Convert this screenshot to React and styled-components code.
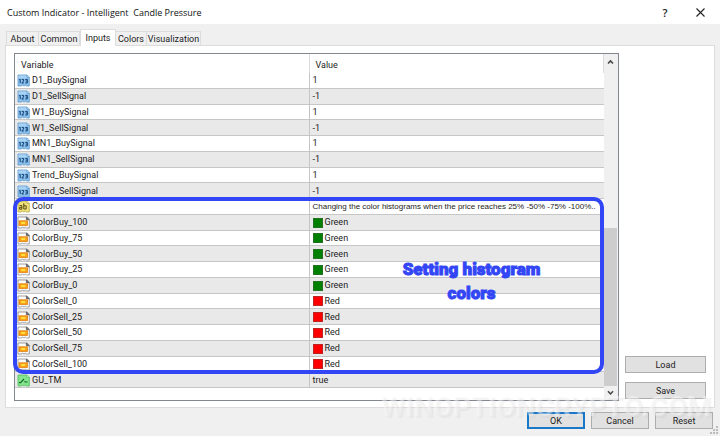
import React from "react";
import styled, { createGlobalStyle } from "styled-components";

const GlobalStyle = createGlobalStyle`
    * {
        box-sizing: border-box;
    }

    body {
        margin: 0;
        background: #f0f0f0;
        color: #1c1c1c;
        font-family: Roboto, "Liberation Sans", sans-serif;
        font-size: 9px;
    }
`

const Dialog = styled.div`
    position: relative;
    display: flex;
    flex-direction: column;
    min-height: 100vh;
    overflow: hidden;
`

const TitleBar = styled.header`
    display: flex;
    align-items: center;
    height: 24px;
    padding: 0 13px 0 7px;
    background: #fff;
`

const Title = styled.h1`
    flex: 1;
    margin: 0;
    font-family: "Open Sans", "Noto Sans", sans-serif;
    font-size: 9px;
    font-weight: 400;
    white-space: pre;
    color: #111;
`

const TitleButton = styled.button`
    display: flex;
    align-items: center;
    justify-content: center;
    width: 14px;
    height: 20px;
    margin-left: 21px;
    padding: 0;
    border: 0;
    background: none;
    font-family: "Open Sans", sans-serif;
    font-size: 11px;
    font-weight: 600;
    color: #222;
`

const Tabs = styled.nav`
    display: flex;
    align-items: flex-end;
    height: 21px;
    padding-left: 6px;
`

const Tab = styled.button`
    position: relative;
    z-index: ${props => (props.$active ? 1 : 0)};
    width: ${props => props.$width}px;
    height: ${props => (props.$active ? 17 : 14)}px;
    margin-bottom: ${props => (props.$active ? -1 : 0)}px;
    padding: 0;
    border: 1px solid #dcdcdc;
    border-bottom: 0;
    border-left-width: ${props => (props.$joined ? 0 : 1)}px;
    background: ${props => (props.$active ? "#fff" : "#f0f0f0")};
    font: inherit;
    color: inherit;
`

const Panel = styled.main`
    display: flex;
    gap: 6px;
    margin: 0 5px;
    padding: 7px 8px 6px;
    border: 1px solid #dcdcdc;
    background: #fff;
`

const List = styled.div`
    position: relative;
    flex: 1;
    display: flex;
    height: 348px;
    border: 1px solid #828790;
    background: #fff;
`

const Rows = styled.div`
    flex: 1;
    min-width: 0;
`

const Table = styled.table`
    width: 100%;
    height: 334px;
    table-layout: fixed;
    border-collapse: separate;
    border-spacing: 0;
`

const HeadCell = styled.th`
    height: 19px;
    padding: 2px 6px 0;
    border-right: 1px solid #dcdcdc;
    font-weight: 400;
    text-align: left;
`

const Row = styled.tr`
    &:nth-child(even) {
        background: #e9e9e9;
    }
`

const Cell = styled.td`
    padding: 1px 0 0 3px;
    border-bottom: 1px solid #c6c6c6;
    line-height: 13px;
    white-space: nowrap;

    &:first-child {
        padding-left: 2px;
        border-right: 1px solid #c6c6c6;
    }
`

const CellContent = styled.div`
    display: flex;
    align-items: center;
    gap: 2px;
    height: 13px;
`

const Caption = styled.span`
    font-family: "Liberation Sans", Arial, sans-serif;
    font-size: 8px;
`

const Swatch = styled.span`
    width: 10px;
    height: 10px;
    border: 1px solid rgba(90, 90, 90, 0.4);
    background: ${props => props.$color};
`

const ScrollBar = styled.div`
    display: flex;
    flex-direction: column;
    width: 14px;
    padding: 1px 1px 0 0;
    background: #f0f0f0;
`

const ScrollButton = styled.button`
    display: flex;
    align-items: center;
    justify-content: center;
    height: 14px;
    padding: 0;
    border: 0;
    background: #f0f0f0;
`

const ScrollTrack = styled.div`
    flex: 1;
    display: flex;
    flex-direction: column;
    justify-content: flex-end;
`

const ScrollThumb = styled.div`
    height: 50%;
    background: #cdcdcd;
`

const Side = styled.div`
    display: flex;
    flex-direction: column;
    justify-content: flex-end;
    gap: 9px;
    width: 81px;
    padding-bottom: 2px;
`

const Button = styled.button`
    height: 17px;
    min-width: 58px;
    padding: 0;
    border: ${props => (props.$primary ? "2px solid #1a78c8" : "1px solid #adadad")};
    background: #e1e1e1;
    font: inherit;
    color: inherit;
`

const Footer = styled.footer`
    display: flex;
    justify-content: flex-end;
    gap: 6px;
    padding: 4px 7px 6px;
`

const Grip = styled.svg`
    position: absolute;
    right: 2px;
    bottom: 2px;
`

const Highlight = styled.div`
    position: absolute;
    top: 143px;
    left: -2px;
    right: 14px;
    height: 177px;
    display: flex;
    align-items: center;
    justify-content: center;
    padding: 0 0 10px 326px;
    border: 4px solid #3346f5;
    border-radius: 10px;
    pointer-events: none;
`

const HighlightText = styled.p`
    margin: 0;
    font-family: Impact, Roboto, "Liberation Sans", sans-serif;
    font-size: 17px;
    font-weight: 900;
    line-height: 24px;
    text-align: center;
    white-space: nowrap;
    color: #3346f5;
    -webkit-text-stroke: 1px #3346f5;
`

const Watermark = styled.div`
    position: absolute;
    right: 8px;
    bottom: 4px;
    font-family: Impact, Roboto, "Liberation Sans", sans-serif;
    font-size: 28px;
    font-weight: 700;
    line-height: 48px;
    color: rgba(240, 240, 240, 0.2);
    text-shadow: 1px 1px 1px rgba(0, 0, 0, 0.04), -1px -1px 1px rgba(255, 255, 255, 0.4);
    pointer-events: none;
`

function NumberIcon(){
    return(
        <svg width="13" height="13" viewBox="0 0 13 13" aria-hidden="true">
            <path d="M1 1h9l2.3 2v9H9.5l-1-.8-1.5.8-1.5-.8-1.5.8H1z" fill="#8cc2ee" stroke="#5b98cc" strokeWidth="0.8"/>
            <path d="M1.5 1.5h8L10 4.5H1.5z" fill="#a9d2f5"/>
            <path d="M10 1v2.3h2.3" fill="#d9ecfb" stroke="#4d8cc4" strokeWidth="0.6"/>
            <path d="M2.2 5.8l1-.6v4M4.8 5.4h1.8v1.6l-1.8 2h2M8.3 5.4h2v3.6h-2M8.6 7.1h1.6" fill="none" stroke="#123f73" strokeWidth="1"/>
        </svg>
    )
}

function TextIcon(){
    return(
        <svg width="13" height="13" viewBox="0 0 13 13" aria-hidden="true">
            <path d="M1 1h9l2.3 2v9H9.5l-1-.8-1.5.8-1.5-.8-1.5.8H1z" fill="#efe27a" stroke="#b8a746" strokeWidth="0.8"/>
            <path d="M10 1v2.3h2.3" fill="#fbf6c4" stroke="#a8983c" strokeWidth="0.6"/>
            <path d="M2.5 5.6h2.4v3.6H2.6V7.4h2.2M6.8 3.2V9h2.4V5.8H6.8" fill="none" stroke="#5a4c10" strokeWidth="1"/>
        </svg>
    )
}

function ColorIcon(){
    return(
        <svg width="13" height="13" viewBox="0 0 13 13" aria-hidden="true">
            <path d="M1 1h9l2.3 2v9H9.5l-1-.8-1.5.8-1.5-.8-1.5.8H1z" fill="#fbfbfb" stroke="#8a8a8a" strokeWidth="0.8"/>
            <path d="M9.4 1v2.8h2.9z" fill="#666" stroke="#555" strokeWidth="0.7"/>
            <rect x="2" y="4.8" width="8.4" height="4.6" fill="#f7a01c" stroke="#e5800c" strokeWidth="0.8"/>
            <rect x="4.2" y="6" width="4" height="2" fill="#ffdf3a"/>
        </svg>
    )
}

function BoolIcon(){
    return(
        <svg width="13" height="13" viewBox="0 0 13 13" aria-hidden="true">
            <path d="M1 1h9l2.3 2v9H9.5l-1-.8-1.5.8-1.5-.8-1.5.8H1z" fill="#84e58c" stroke="#4fb85c" strokeWidth="0.8"/>
            <path d="M10 1v2.3h2.3" fill="#d3f8d6" stroke="#4fb85c" strokeWidth="0.6"/>
            <path d="M2 8.6h1.6l3.4-3.6M7.4 7.4l1 .6h2.2" fill="none" stroke="#14682a" strokeWidth="1.2"/>
        </svg>
    )
}

function Arrow({ down }){
    return(
        <svg width="7" height="6" viewBox="0 0 7 6" aria-hidden="true">
            <path d={down ? "M1 1.3l2.5 2.6L6 1.3" : "M1 4.5l2.5-2.6L6 4.5"} fill="none" stroke="#444" strokeWidth="1.5"/>
        </svg>
    )
}

const icons = {
    number: NumberIcon,
    text: TextIcon,
    color: ColorIcon,
    bool: BoolIcon,
}

const swatches = { Green: "#008000", Red: "#ff0000" }

const tabs = [
    { name: "About", width: 33 },
    { name: "Common", width: 41 },
    { name: "Inputs", width: 36 },
    { name: "Colors", width: 31 },
    { name: "Visualization", width: 54 },
]

const inputs = [
    ["number", "D1_BuySignal", "1"],
    ["number", "D1_SellSignal", "-1"],
    ["number", "W1_BuySignal", "1"],
    ["number", "W1_SellSignal", "-1"],
    ["number", "MN1_BuySignal", "1"],
    ["number", "MN1_SellSignal", "-1"],
    ["number", "Trend_BuySignal", "1"],
    ["number", "Trend_SellSignal", "-1"],
    ["text", "Color", "Changing the color histograms when the price reaches 25% -50% -75% -100%.."],
    ["color", "ColorBuy_100", "Green"],
    ["color", "ColorBuy_75", "Green"],
    ["color", "ColorBuy_50", "Green"],
    ["color", "ColorBuy_25", "Green"],
    ["color", "ColorBuy_0", "Green"],
    ["color", "ColorSell_0", "Red"],
    ["color", "ColorSell_25", "Red"],
    ["color", "ColorSell_50", "Red"],
    ["color", "ColorSell_75", "Red"],
    ["color", "ColorSell_100", "Red"],
    ["bool", "GU_TM", "true"],
]

function InputRow({ type, name, value }){
    const Icon = icons[type]
    return(
        <Row>
            <Cell>
                <CellContent><Icon/>{name}</CellContent>
            </Cell>
            <Cell>
                <CellContent>
                    {type === "color" && <Swatch $color={swatches[value]}/>}
                    {type === "text" ? <Caption>{value}</Caption> : value}
                </CellContent>
            </Cell>
        </Row>
    )
}

function App(){
    return(
        <>
            <GlobalStyle/>
            <Dialog>
                <TitleBar>
                    <Title>Custom Indicator - Intelligent  Candle Pressure</Title>
                    <TitleButton>?</TitleButton>
                    <TitleButton aria-label="Close">
                        <svg width="9" height="9" viewBox="0 0 9 9">
                            <path d="M0.5 0.5l8 8M8.5 0.5l-8 8" stroke="#222" strokeWidth="1.1"/>
                        </svg>
                    </TitleButton>
                </TitleBar>
                <Tabs>
                    {tabs.map((tab, i) => (
                        <Tab key={tab.name} $width={tab.width} $active={tab.name === "Inputs"} $joined={i > 0 && tab.name !== "Inputs"}>
                            {tab.name}
                        </Tab>
                    ))}
                </Tabs>
                <Panel>
                    <List>
                        <Rows>
                            <Table>
                                <thead>
                                    <tr>
                                        <HeadCell>Variable</HeadCell>
                                        <HeadCell>Value</HeadCell>
                                    </tr>
                                </thead>
                                <tbody>
                                    {inputs.map(([type, name, value]) => (
                                        <InputRow key={name} type={type} name={name} value={value}/>
                                    ))}
                                </tbody>
                            </Table>
                        </Rows>
                        <ScrollBar>
                            <ScrollButton aria-label="Scroll up"><Arrow/></ScrollButton>
                            <ScrollTrack><ScrollThumb/></ScrollTrack>
                            <ScrollButton aria-label="Scroll down"><Arrow down/></ScrollButton>
                        </ScrollBar>
                        <Highlight>
                            <HighlightText>Setting histogram<br/>colors</HighlightText>
                        </Highlight>
                    </List>
                    <Side>
                        <Button>Load</Button>
                        <Button>Save</Button>
                    </Side>
                </Panel>
                <Footer>
                    <Button $primary>OK</Button>
                    <Button>Cancel</Button>
                    <Button>Reset</Button>
                </Footer>
                <Grip width="8" height="8" viewBox="0 0 8 8" aria-hidden="true">
                    <path d="M6 0h2v2H6zM3 3h2v2H3zM6 3h2v2H6zM0 6h2v2H0zM3 6h2v2H3zM6 6h2v2H6z" fill="#bbb"/>
                </Grip>
                <Watermark>WINOPTIONCRYPTO.COM</Watermark>
            </Dialog>
        </>
    )
}

export default App
